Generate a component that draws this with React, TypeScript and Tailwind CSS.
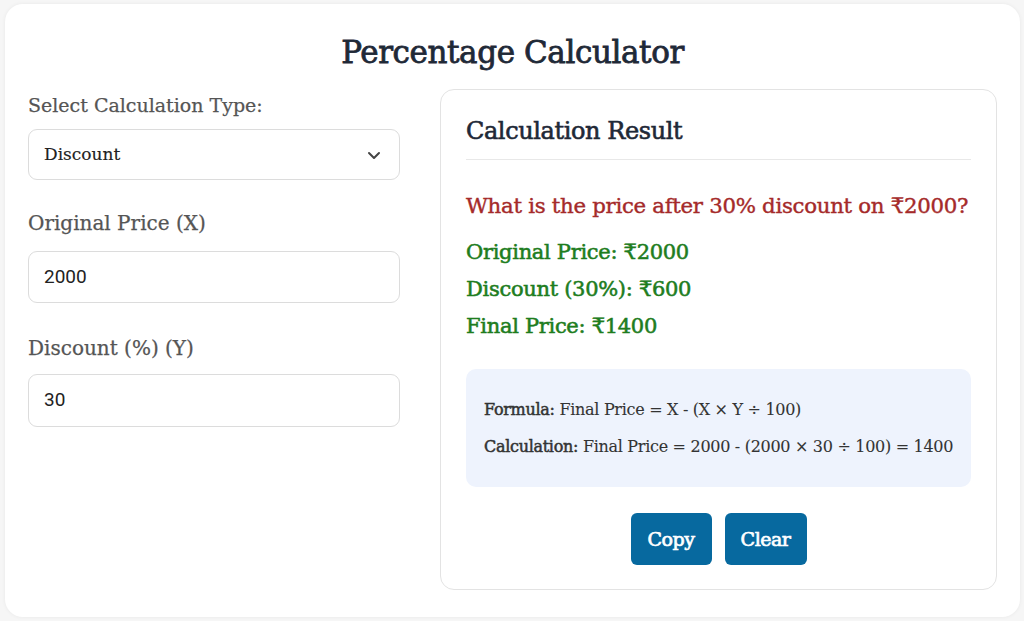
import React from "react";

const slab = { fontFamily: '"DejaVu Serif", "Noto Sans", serif' };
const roboto = { fontFamily: "Roboto, sans-serif" };

export default function App() {
  return (
    <div className="min-h-screen w-full bg-[#f6f6f6] p-[4px_4px_4px_5px]">
      <div
        className="rounded-[18px] bg-white shadow-[0_0_4px_rgba(0,0,0,0.06)] px-[23px] pt-[28px] h-[613px]"
        style={slab}
      >
        <h1 className="text-center text-[31px] leading-[40px] text-[#1f2937] tracking-[-0.4px] [-webkit-text-stroke-width:0.8px]">
          Percentage Calculator
        </h1>
        <div className="mt-[17px] flex gap-[40px]">
          <div className="w-[372px] shrink-0 pt-[4px]">
            <label className="block text-[19px] leading-[24px] text-[#555] [-webkit-text-stroke-width:0.25px]">
              Select Calculation Type:
            </label>
            <div className="mt-[12px] h-[51px] rounded-[9px] border border-[#dcdcdc] flex items-center justify-between pl-[15px] pr-[15px]">
              <span className="text-[17px] text-[#222] [-webkit-text-stroke-width:0.15px]">Discount</span>
              <svg width="16" height="16" viewBox="0 0 16 16" fill="none" className="mr-[2px]">
                <path d="M3 6l5 5 5-5" stroke="#444" strokeWidth="2" strokeLinecap="round" strokeLinejoin="round" />
              </svg>
            </div>
            <label className="block mt-[29px] text-[20px] leading-[28px] text-[#555] [-webkit-text-stroke-width:0.25px]">
              Original Price (X)
            </label>
            <div className="mt-[14px] h-[52px] rounded-[9px] border border-[#dcdcdc] flex items-center pl-[15px]">
              <span className="text-[19px] text-[#222]" style={roboto}>
                2000
              </span>
            </div>
            <label className="block mt-[31px] text-[20px] leading-[28px] text-[#555] [-webkit-text-stroke-width:0.25px]">
              Discount (%) (Y)
            </label>
            <div className="mt-[12px] h-[53px] rounded-[9px] border border-[#dcdcdc] flex items-center pl-[15px]">
              <span className="text-[19px] text-[#222]" style={roboto}>
                30
              </span>
            </div>
          </div>
          <div className="w-[557px] h-[501px] rounded-[14px] border border-[#e3e3e3] px-[25px] pt-[25px]">
            <h2 className="text-[24px] leading-[32px] text-[#1f2937] tracking-[-0.4px] [-webkit-text-stroke-width:0.6px]">
              Calculation Result
            </h2>
            <div className="mt-[12px] h-px bg-[#e8e8e8]" />
            <p className="mt-[32px] whitespace-nowrap text-[21.3px] leading-[28px] text-[#a52a2a] tracking-[-0.3px] [-webkit-text-stroke-width:0.4px]">
              What is the price after 30% discount on ₹2000?
            </p>
            <div className="mt-[14px] text-[21px] leading-[37px] text-[#1e7d1e] tracking-[-0.3px] [-webkit-text-stroke-width:0.55px]">
              <p>Original Price: ₹2000</p>
              <p>Discount (30%): ₹600</p>
              <p>Final Price: ₹1400</p>
            </div>
            <div className="mt-[24px] h-[118px] rounded-[10px] bg-[#eef3fd] px-[18px] pt-[22px] text-[16px] leading-[37px] text-[#333] tracking-[-0.3px] whitespace-nowrap [-webkit-text-stroke-width:0.1px]">
              <p>
                <span className="[-webkit-text-stroke-width:0.5px]">Formula:</span> Final Price = X - (X × Y ÷ 100)
              </p>
              <p>
                <span className="[-webkit-text-stroke-width:0.5px]">Calculation:</span> Final Price = 2000 - (2000 × 30 ÷ 100) = 1400
              </p>
            </div>
            <div className="mt-[26px] flex justify-center gap-[13px]">
              <button className="h-[52px] w-[81px] rounded-[6px] bg-[#07699f] text-white text-[19px] tracking-[-0.5px] [-webkit-text-stroke-width:0.7px]">
                Copy
              </button>
              <button className="h-[52px] w-[82px] rounded-[6px] bg-[#07699f] text-white text-[19px] tracking-[-0.5px] [-webkit-text-stroke-width:0.7px]">
                Clear
              </button>
            </div>
          </div>
        </div>
      </div>
    </div>
  );
}
